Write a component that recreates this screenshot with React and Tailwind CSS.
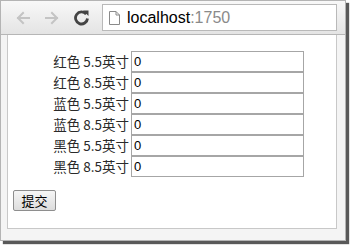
import React from 'react';

const rows = ['红色 5.5英寸', '红色 8.5英寸', '蓝色 5.5英寸', '蓝色 8.5英寸', '黑色 5.5英寸', '黑色 8.5英寸'];

function Arrow({ flip, color }) {
  return (
    <svg width="16" height="14" viewBox="0 0 16 14" style={{ transform: flip ? 'scaleX(-1)' : undefined }}>
      <path d="M14 7H3M8 2L3 7l5 5" fill="none" stroke={color} strokeWidth="2" strokeLinecap="square" />
    </svg>
  );
}

function Reload() {
  return (
    <svg width="17" height="17" viewBox="0 0 17 17">
      <path d="M13.2 5.2A6 6 0 1 0 14.5 9.5" fill="none" stroke="#444" strokeWidth="2.8" />
      <path d="M10 1.5h5.5V7z" fill="#444" />
    </svg>
  );
}

function PageIcon() {
  return (
    <svg width="11" height="14" viewBox="0 0 11 14">
      <path d="M0.5 0.5h6.5l3.5 3.5v9.5h-10z M7 0.5v3.5h3.5" fill="#fff" stroke="#8a8a8a" strokeWidth="1" />
    </svg>
  );
}

export default function App() {
  return (
    <div className="w-[352px] h-[246px] bg-white overflow-hidden" style={{ fontFamily: '"Liberation Sans", "Noto Sans CJK SC", sans-serif' }}>
      <div className="w-[346px] h-[241px] flex flex-col bg-[#f4f4f4] border border-[#b4b4b4] shadow-[3px_3px_1px_rgba(0,0,0,0.65)]">
        {/* Toolbar */}
        <div className="h-[34px] flex items-center bg-gradient-to-b from-[#f8f8f8] to-[#e4e4e4] border-b border-[#b6b6b6] pl-[14px]">
          <Arrow color="#c4c4c4" />
          <div className="w-[13px]" />
          <Arrow flip color="#c4c4c4" />
          <div className="w-[13px]" />
          <Reload />
          <div className="ml-[12px] w-[235px] h-[27px] bg-white border border-[#b9b9b9] flex items-center pl-[6px]">
            <PageIcon />
            <span className="ml-[7px] text-[16px] text-black leading-none">
              localhost<span className="text-[#8a8a8a]">:1750</span>
            </span>
          </div>
        </div>
        {/* Page */}
        <div className="ml-[6px] w-[330px] h-[194px] bg-white border-x border-b border-[#c8c8c8] pt-[16px]">
          <div className="flex flex-col">
            {rows.map((label, i) => (
              <div key={i} className="flex items-center h-[21px]">
                <span className="w-[121px] text-right text-[13.5px] text-[#2a2a2a]" style={{ fontFamily: '"Noto Sans CJK SC", sans-serif' }}>
                  {label}
                </span>
                <input
                  readOnly
                  value="0"
                  className="ml-[2px] w-[173px] h-[21px] border border-[#a6a6a6] px-[2px] text-[13px] text-black outline-none"
                  style={{ fontFamily: '"Liberation Sans", sans-serif' }}
                />
              </div>
            ))}
          </div>
          <button className="mt-[13px] ml-[5px] w-[43px] h-[21px] border border-[#8e8e8e] rounded-[2px] bg-gradient-to-b from-[#f6f6f6] to-[#dddddd] text-[13px] text-black leading-none" style={{ fontFamily: '"Noto Sans CJK SC", sans-serif' }}>
            提交
          </button>
        </div>
      </div>
    </div>
  );
}
